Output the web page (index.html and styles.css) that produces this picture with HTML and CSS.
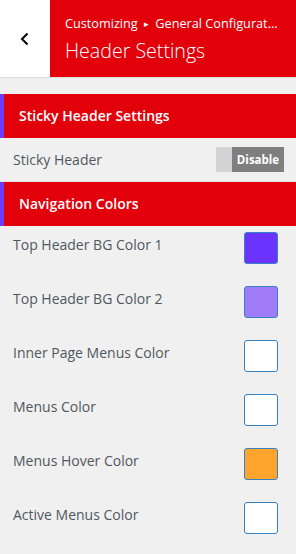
FILE: index.html
```html
<!DOCTYPE html>
<html lang="en">
<head>
<meta charset="UTF-8" />
<meta name="viewport" content="width=device-width, initial-scale=1.0"/>
<title>Header Settings</title>
<link rel="stylesheet" href="styles.css">
</head>
<body>
<div class="panel-header">
  <button class="back-btn" aria-label="Back">
    <svg width="12" height="16" viewBox="0 0 12 16"><path d="M8.5 2.5 L3 8 L8.5 13.5" fill="none" stroke="#000" stroke-width="2"/></svg>
  </button>
  <div class="panel-title">
    <div class="crumb">Customizing <span class="sep">&#9656;</span> General Configurat...</div>
    <h1>Header Settings</h1>
  </div>
</div>

<div class="section-title first">Sticky Header Settings</div>
<div class="toggle-row">
  <span class="label">Sticky Header</span>
  <div class="toggle"><span class="knob"></span><span class="state">Disable</span></div>
</div>

<div class="section-title">Navigation Colors</div>
<div class="color-list">
  <div class="color-row"><span class="label">Top Header BG Color 1</span><span class="swatch swatch-purple"></span></div>
  <div class="color-row"><span class="label">Top Header BG Color 2</span><span class="swatch swatch-lilac"></span></div>
  <div class="color-row"><span class="label">Inner Page Menus Color</span><span class="swatch"></span></div>
  <div class="color-row"><span class="label">Menus Color</span><span class="swatch"></span></div>
  <div class="color-row"><span class="label">Menus Hover Color</span><span class="swatch swatch-orange"></span></div>
  <div class="color-row"><span class="label">Active Menus Color</span><span class="swatch"></span></div>
</div>
</body>
</html>
```
FILE: styles.css
```css
body {
  margin: 0;
  background-color: #f0f0f0;
  font-family: 'Open Sans', 'Noto Sans', sans-serif;
  color: #50575e;
}

.panel-header {
  display: flex;
  height: 77px;
  border-bottom: 1px solid #dcdcde;
}

.back-btn {
  width: 50px;
  border: 0;
  padding: 0;
  background-color: #fff;
  display: flex;
  align-items: center;
  justify-content: center;
}

.panel-title {
  flex: 1;
  background-color: #e2000b;
  color: #fff;
  padding: 13px 0 0 15px;
  overflow: hidden;
}

.crumb {
  font-size: 12.7px;
  line-height: 20px;
  white-space: nowrap;
}

.crumb .sep {
  font-size: 9px;
  margin: 0 3px;
  vertical-align: 1px;
}

h1 {
  margin: 3px 0 0;
  font-size: 19.6px;
  font-weight: 300;
  line-height: 28px;
}

.section-title {
  background-color: #e2000b;
  border-left: 4px solid #6a3cff;
  color: #fff;
  font-size: 14px;
  font-weight: 600;
  height: 44px;
  line-height: 44px;
  padding-left: 15px;
}

.section-title.first {
  margin-top: 16px;
}

.toggle-row {
  display: flex;
  align-items: center;
  justify-content: space-between;
  height: 43px;
  padding: 0 12px 0 13px;
  border-bottom: 1px solid #e4e4e4;
}

.label {
  font-size: 14px;
}

.toggle {
  display: flex;
  height: 25px;
  width: 68px;
}

.knob {
  width: 16px;
  background-color: #d3d3d3;
}

.state {
  flex: 1;
  background-color: #7f7f7f;
  color: #fff;
  font-size: 11.5px;
  font-weight: 700;
  line-height: 25px;
  text-align: center;
}

.color-list {
  padding-top: 6px;
}

.color-row {
  display: flex;
  justify-content: space-between;
  align-items: flex-start;
  height: 54px;
  padding: 0 18px 0 13px;
}

.color-row .label {
  line-height: 20px;
  padding-top: 3px;
}

.swatch {
  width: 32px;
  height: 30px;
  border: 1px solid #3582c4;
  border-radius: 3px;
  background-color: #fff;
}

.swatch-purple { background-color: #6a33ff; }
.swatch-lilac { background-color: #a07cf8; }
.swatch-orange { background-color: #ffa42d; }
```
